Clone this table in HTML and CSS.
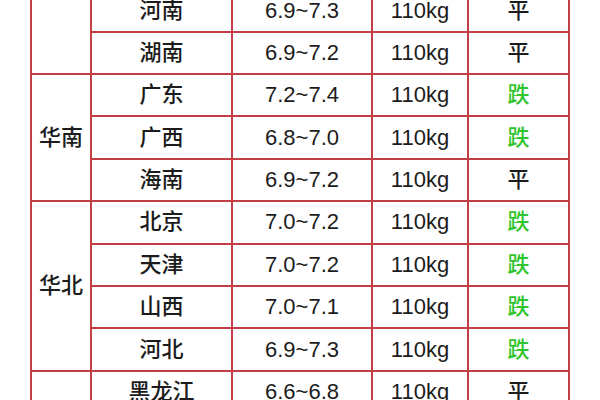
FILE: index.html
```html
<!DOCTYPE html>
<html lang="zh">
<head>
<meta charset="utf-8">
<link rel="stylesheet" href="styles.css">
</head>
<body>
<table class="price-table">
  <colgroup>
    <col class="c-region">
    <col class="c-prov">
    <col class="c-price">
    <col class="c-weight">
    <col class="c-trend">
  </colgroup>
  <tbody>
    <tr><td class="region" rowspan="2"></td><td>河南</td><td>6.9~7.3</td><td>110kg</td><td>平</td></tr>
    <tr><td>湖南</td><td>6.9~7.2</td><td>110kg</td><td>平</td></tr>
    <tr><td class="region" rowspan="3">华南</td><td>广东</td><td>7.2~7.4</td><td>110kg</td><td class="down">跌</td></tr>
    <tr><td>广西</td><td>6.8~7.0</td><td>110kg</td><td class="down">跌</td></tr>
    <tr><td>海南</td><td>6.9~7.2</td><td>110kg</td><td>平</td></tr>
    <tr><td class="region" rowspan="4">华北</td><td>北京</td><td>7.0~7.2</td><td>110kg</td><td class="down">跌</td></tr>
    <tr><td>天津</td><td>7.0~7.2</td><td>110kg</td><td class="down">跌</td></tr>
    <tr><td>山西</td><td>7.0~7.1</td><td>110kg</td><td class="down">跌</td></tr>
    <tr><td>河北</td><td>6.9~7.3</td><td>110kg</td><td class="down">跌</td></tr>
    <tr><td class="region"></td><td>黑龙江</td><td>6.6~6.8</td><td>110kg</td><td>平</td></tr>
  </tbody>
</table>
</body>
</html>
```
FILE: styles.css
```css
html, body {
  margin: 0;
  padding: 0;
  background: #ffffff;
  overflow: hidden;
}
body {
  width: 600px;
  height: 400px;
  font-family: "Liberation Sans", "Noto Sans CJK SC", sans-serif;
  color: #1c1c1c;
}
.price-table {
  border-collapse: collapse;
  table-layout: fixed;
  width: 540px;
  margin-left: 30px;
  margin-top: -11.7px;
}
.c-region { width: 60px; }
.c-prov { width: 141px; }
.c-price { width: 140px; }
.c-weight { width: 96px; }
.c-trend { width: 101px; }
.price-table tr {
  height: 42.375px;
}
.price-table td {
  border: 2px solid #c43e46;
  padding: 0;
  text-align: center;
  vertical-align: middle;
  font-size: 22px;
  font-weight: 500;
  line-height: 1;
}
.price-table td.down {
  color: #2ec52e;
}
```
